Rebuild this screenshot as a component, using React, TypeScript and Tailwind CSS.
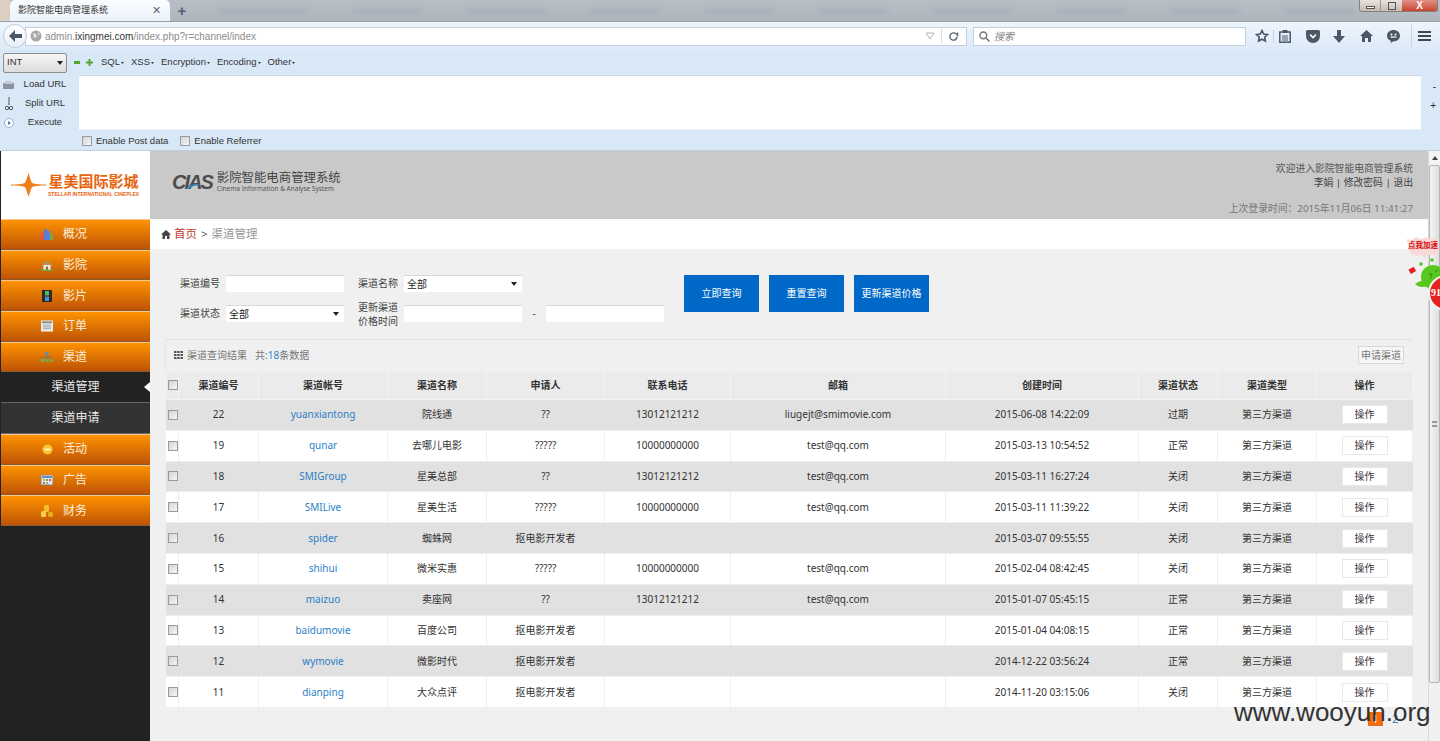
import React from "react";

const FONT = "font-['Noto_Sans','Noto_Sans_CJK_SC',sans-serif]";
const ARIAL = "font-['Liberation_Sans','Noto_Sans_CJK_SC',sans-serif]";

type Row = [string, string, string, string, string, string, string, string];

const rows: Row[] = [
  ["22", "yuanxiantong", "院线通", "??", "13012121212", "liugejt@smimovie.com", "2015-06-08 14:22:09", "过期"],
  ["19", "qunar", "去哪儿电影", "?????", "10000000000", "test@qq.com", "2015-03-13 10:54:52", "正常"],
  ["18", "SMIGroup", "星美总部", "??", "13012121212", "test@qq.com", "2015-03-11 16:27:24", "关闭"],
  ["17", "SMILive", "星美生活", "?????", "10000000000", "test@qq.com", "2015-03-11 11:39:22", "关闭"],
  ["16", "spider", "蜘蛛网", "抠电影开发者", "", "", "2015-03-07 09:55:55", "关闭"],
  ["15", "shihui", "微米实惠", "?????", "10000000000", "test@qq.com", "2015-02-04 08:42:45", "关闭"],
  ["14", "maizuo", "卖座网", "??", "13012121212", "test@qq.com", "2015-01-07 05:45:15", "正常"],
  ["13", "baidumovie", "百度公司", "抠电影开发者", "", "", "2015-01-04 04:08:15", "正常"],
  ["12", "wymovie", "微影时代", "抠电影开发者", "", "", "2014-12-22 03:56:24", "正常"],
  ["11", "dianping", "大众点评", "抠电影开发者", "", "", "2014-11-20 03:15:06", "关闭"],
];

const heads = ["渠道编号", "渠道帐号", "渠道名称", "申请人", "联系电话", "邮箱", "创建时间", "渠道状态", "渠道类型", "操作"];
const colWidths = [13, 80, 129, 99, 118, 126, 215, 193, 79, 99, 96];

function Checkbox({ className = "" }: { className?: string }) {
  return <span className={`block w-[10px] h-[10px] border border-[#9a9a9a] bg-gradient-to-br from-[#d4d4d4] to-[#f6f6f6] ${className}`} />;
}

function Select({ value, width = "w-[118px]" }: { value: string; width?: string }) {
  return (
    <div className={`${width} h-[17px] bg-white border-t border-[#d8d8d8] flex items-center justify-between pl-[3px] pr-[5px] text-[10px] text-[#222]`}>
      <span>{value}</span>
      <svg width="6" height="4" viewBox="0 0 6 4"><path d="M0 0h6L3 4z" fill="#222" /></svg>
    </div>
  );
}

function Input({ width = "w-[118px]" }: { width?: string }) {
  return <div className={`${width} h-[17px] bg-white border-t border-[#d8d8d8]`} />;
}

function MenuItem({ label, active, sub, icon }: { label: string; active?: boolean; sub?: boolean; icon?: React.ReactNode }) {
  if (sub) {
    return (
      <div className={`relative h-[30.7px] flex items-center justify-center text-[12px] text-[#e8e8e8] border-b border-[#666] ${active ? "bg-[#222]" : "bg-[#333]"}`}>
        {label}
        {active && <span className="absolute right-0 top-[10px] w-0 h-0 border-y-[5px] border-y-transparent border-r-[6px] border-r-white" />}
      </div>
    );
  }
  return (
    <div className="h-[30.7px] flex items-center pl-[40px] gap-[10px] text-[12px] text-[#fbeedd] border-t border-[#f8c78e] border-b border-b-[#8a5a2a] bg-gradient-to-b from-[#ff9300] to-[#bd5305]">
      <span className="w-[12px] h-[12px] flex items-center justify-center">{icon}</span>
      {label}
    </div>
  );
}

const icons = {
  bars: (
    <svg width="12" height="12" viewBox="0 0 12 12">
      <rect x="0" y="5" width="3" height="7" fill="#e2524e" />
      <rect x="3" y="1" width="3" height="11" fill="#5b7fd6" />
      <rect x="6" y="3" width="3" height="9" fill="#5b7fd6" />
      <rect x="9" y="6" width="3" height="6" fill="#6bb04c" />
    </svg>
  ),
  house: (
    <svg width="12" height="12" viewBox="0 0 12 12">
      <path d="M6 1 0 7h2v4h8V7h2z" fill="#b98a5c" />
      <rect x="2.5" y="6" width="7" height="5" fill="#f3ead9" />
      <rect x="5" y="7.5" width="2" height="3.5" fill="#8d6b44" />
      <rect x="0" y="10.5" width="12" height="1.5" fill="#6aa84f" />
    </svg>
  ),
  film: (
    <svg width="10" height="12" viewBox="0 0 10 12">
      <rect width="10" height="12" fill="#2b2b2b" />
      <rect x="3" y="1" width="4" height="4.5" fill="#57b85a" />
      <rect x="3" y="6.5" width="4" height="4.5" fill="#4a90c8" />
    </svg>
  ),
  doc: (
    <svg width="13" height="12" viewBox="0 0 13 12">
      <rect width="13" height="12" fill="#eeeeee" />
      <rect x="1" y="1" width="11" height="2" fill="#8a8a8a" />
      <path d="M2 5h9M2 7h9M2 9h9" stroke="#9a9a9a" strokeWidth="1" />
    </svg>
  ),
  tree: (
    <svg width="12" height="10" viewBox="0 0 12 10">
      <rect x="4.5" y="0" width="3" height="3" fill="#5a8fc0" />
      <path d="M6 3v2M1.5 7V5h9v2M6 5v2" stroke="#777" strokeWidth="0.8" fill="none" />
      <rect x="0" y="7" width="3" height="3" fill="#6bb04c" />
      <rect x="4.5" y="7" width="3" height="3" fill="#6bb04c" />
      <rect x="9" y="7" width="3" height="3" fill="#6bb04c" />
    </svg>
  ),
  coin: (
    <svg width="11" height="11" viewBox="0 0 11 11">
      <circle cx="5.5" cy="5.5" r="5" fill="#f7c531" />
      <rect x="2.5" y="4.5" width="6" height="2" fill="#fff3c4" />
    </svg>
  ),
  table: (
    <svg width="12" height="10" viewBox="0 0 12 10">
      <rect width="12" height="10" fill="#dbe7f5" stroke="#6c8db5" strokeWidth="1" />
      <rect x="1" y="1" width="10" height="2" fill="#6c8db5" />
      <rect x="2" y="4" width="2" height="2" fill="#e4a23b" />
      <rect x="5" y="4" width="2" height="2" fill="#6bb04c" />
      <rect x="8" y="4" width="2" height="2" fill="#d9574f" />
      <rect x="2" y="7" width="2" height="2" fill="#6c8db5" />
      <rect x="5" y="7" width="2" height="2" fill="#e4a23b" />
    </svg>
  ),
  coins: (
    <svg width="12" height="12" viewBox="0 0 12 12">
      <rect x="3" y="0" width="5" height="7" rx="1.5" fill="#f5c02e" />
      <rect x="0" y="6" width="5" height="6" rx="1.5" fill="#f7cf52" />
      <rect x="7" y="7" width="5" height="5" rx="1.5" fill="#e9a91e" />
    </svg>
  ),
};

function BrowserChrome() {
  const stroke = "#4a5866";
  return (
    <div className={`shrink-0 bg-[#d9e8f7] text-[#333] ${ARIAL}`}>
      {/* tab strip */}
      <div className="relative h-[22px] flex items-end bg-gradient-to-b from-[#b8bec6] to-[#adb5bd] border-b border-[#98a0a8]">
        <div className="w-[10px] h-full bg-[#dccfc2]" />
        <div className="w-[160px] h-[21px] bg-gradient-to-b from-[#fbfdff] to-[#eaf2fb] rounded-t-[5px] flex items-center pl-[8px] pr-[9px] justify-between text-[9px] text-[#333]">
          <span>影院智能电商管理系统</span>
          <span className="text-[11px] text-[#666]">✕</span>
        </div>
        <span className="w-[24px] h-full flex items-center justify-center text-[15px] font-bold leading-none text-[#55606c]">+</span>
        <div className="flex-1 h-full flex items-center gap-[44px] pl-[24px] opacity-10 blur-[2px] overflow-hidden">
          {[90, 70, 80, 70, 70, 70, 80, 70, 70, 70].map((w, i) => (
            <span key={i} className="h-[6px] bg-[#5c6c80] shrink-0" style={{ width: w }} />
          ))}
        </div>
        <div className="absolute right-[2px] top-0 h-[12px] flex border border-t-0 border-[#8a7f78] rounded-b-[3px] overflow-hidden">
          <span className="w-[21px] bg-gradient-to-b from-[#e8e2da] to-[#c5bdb5] flex items-center justify-center border-r border-[#9b948d]">
            <span className="block w-[9px] h-[3px] mt-[3px] bg-white border border-[#555]" />
          </span>
          <span className="w-[21px] bg-gradient-to-b from-[#e8e2da] to-[#c5bdb5] flex items-center justify-center">
            <span className="block w-[8px] h-[8px] bg-transparent border border-[#555]" />
          </span>
          <span className="w-[35px] bg-gradient-to-b from-[#e0908a] to-[#c8412a] flex items-center justify-center text-white text-[10px] font-bold leading-none">X</span>
        </div>
      </div>
      {/* nav bar */}
      <div className="h-[28px] flex items-center bg-gradient-to-b from-[#eef5fc] to-[#dceaf8] pl-[3px]">
        <span className="z-10 w-[24px] h-[24px] rounded-full bg-gradient-to-b from-white to-[#e6eef7] border border-[#c0ccd8] flex items-center justify-center">
          <svg width="13" height="12" viewBox="0 0 13 12"><path d="M6 0 0 6l6 6V8h7V4H6z" fill="#4a5866" /></svg>
        </span>
        <div className="-ml-[2px] w-[942px] h-[19px] bg-white border border-[#c3d0dd] flex items-center pl-[4px] pr-[7px] text-[10px] text-[#8c8c8c]">
          <svg width="12" height="12" viewBox="0 0 12 12" className="mr-[3px]"><circle cx="6" cy="6" r="5.5" fill="#a8a8a8" /><path d="M3 3l3 1 1 3-3 1zM8 2l2 2-2 1z" fill="#e4e4e4" /></svg>
          <span>admin.</span><span className="text-[#333]">ixingmei.com</span><span>/index.php?r=channel/index</span>
          <svg width="10" height="8" viewBox="0 0 10 8" className="ml-auto"><path d="M1 1h8L5 7z" fill="none" stroke="#aab2ba" /></svg>
          <span className="w-px h-[15px] bg-[#d8dee5] mx-[6px]" />
          <svg width="11" height="11" viewBox="0 0 24 24" fill="none" stroke="#5b6672" strokeWidth="3"><path d="M20 12a8 8 0 1 1-2.5-5.8L21 9V3" /></svg>
        </div>
        <div className="ml-[6px] w-[273px] h-[19px] bg-white border border-[#c3d0dd] flex items-center pl-[5px] text-[10px] italic text-[#888]">
          <svg width="11" height="11" viewBox="0 0 12 12" className="mr-[4px]" fill="none" stroke="#777" strokeWidth="1.6"><circle cx="4.7" cy="4.7" r="3.7" /><path d="M7.5 7.5 11.5 11.5" /></svg>
          搜索
        </div>
        <div className="flex items-center ml-[9px]">
          <svg width="14" height="14" viewBox="0 0 14 14" fill="none" stroke={stroke} strokeWidth="1.6"><path d="m7 1.5 1.7 3.6 3.8.5-2.8 2.6.7 3.8L7 10.2 3.6 12l.7-3.8L1.5 5.6l3.8-.5z" /></svg>
          <span className="w-px h-[13px] bg-[#c6d3e0] ml-[4px] mr-[5px]" />
          <svg width="12" height="13" viewBox="0 0 12 13"><rect x="0.8" y="2" width="10.4" height="10.2" fill="none" stroke={stroke} strokeWidth="1.5" /><rect x="3.5" y="0" width="5" height="3" fill={stroke} /><path d="M3 6h6M3 8h6M3 10h6" stroke={stroke} /></svg>
          <svg width="14" height="13" viewBox="0 0 14 13" className="ml-[15px]"><path d="M1.5 0h11A1.5 1.5 0 0 1 14 1.5V6a7 7 0 0 1-14 0V1.5A1.5 1.5 0 0 1 1.5 0z" fill={stroke} /><path d="m4 4.5 3 3 3-3" stroke="#fff" strokeWidth="1.6" fill="none" /></svg>
          <svg width="12" height="13" viewBox="0 0 12 13" className="ml-[13px]"><path d="M4 0h4v6h4l-6 7-6-7h4z" fill={stroke} /></svg>
          <svg width="13" height="12" viewBox="0 0 13 12" className="ml-[15px]"><path d="M6.5 0 13 6h-2v6H8V8H5v4H2V6H0z" fill={stroke} /></svg>
          <svg width="13" height="13" viewBox="0 0 13 13" className="ml-[14px]"><path d="M6.5 0C10 0 13 2.4 13 5.7s-3 5.6-6.5 5.6L3.5 13l.3-2.3C1.500 9.800 0 8 0 5.700 0 2.400 3 0 6.500 0z" fill={stroke} /><circle cx="4.500" cy="4.500" r="1" fill="#fff" /><circle cx="8.500" cy="4.500" r="1" fill="#fff" /><path d="M3.500 7h6" stroke="#fff" strokeWidth="1.200" /></svg>
          <span className="w-px h-[22px] bg-[#c6d3e0] ml-[11px] mr-[6px]" />
          <span className="flex flex-col gap-[2px]">
            <span className="block w-[13px] h-[2px] bg-[#3d4854]" />
            <span className="block w-[13px] h-[2px] bg-[#3d4854]" />
            <span className="block w-[13px] h-[2px] bg-[#3d4854]" />
          </span>
        </div>
      </div>
      {/* hackbar */}
      <div className="h-[25px] flex items-center pl-[3px] text-[9.500px]">
        <div className="w-[64px] h-[20px] border border-[#8d8d8d] rounded-[2px] bg-gradient-to-b from-[#f6f6f6] to-[#dcdcdc] flex items-center justify-between px-[3px]">
          <span>INT</span>
          <svg width="6" height="4" viewBox="0 0 6 4"><path d="M0 0h6L3 4z" fill="#222" /></svg>
        </div>
        <span className="ml-[7px] w-[6px] h-[3px] bg-[#55a630]" />
        <svg width="7" height="7" viewBox="0 0 7 7" className="ml-[6px]"><path d="M2.500 0h2v2.500H7v2H4.500V7h-2V4.500H0v-2h2.500z" fill="#55a630" /></svg>
        <div className="flex ml-[8px] gap-[7px]">
          {["SQL", "XSS", "Encryption", "Encoding", "Other"].map((m) => (
            <span key={m} className="flex items-center gap-[1px]">
              {m}
              <svg width="3" height="2" viewBox="0 0 3 2"><path d="M0 0h3L1.500 2z" fill="#333" /></svg>
            </span>
          ))}
        </div>
      </div>
      <div className="flex h-[55px]">
        <div className="w-[79px] flex flex-col text-[9.500px]">
          {[
            ["Load URL", <svg key="a" width="11" height="10" viewBox="0 0 11 10"><rect y="3" width="11" height="6" rx="1" fill="#8a949e" /><rect x="2" y="1" width="7" height="3" fill="#c4cbd2" /></svg>],
            ["Split URL", <svg key="b" width="8" height="14" viewBox="0 0 8 14" fill="none" stroke="#555"><path d="M4 0v8" /><circle cx="2" cy="11" r="1.700" /><circle cx="6" cy="11" r="1.700" /></svg>],
            ["Execute", <svg key="c" width="10" height="10" viewBox="0 0 10 10"><circle cx="5" cy="5" r="4.500" fill="#fff" stroke="#8fb0d4" /><path d="M4 3l3 2-3 2z" fill="#4a78b0" /></svg>],
          ].map(([label, icon], i) => (
            <div key={i} className="h-[19px] shrink-0 flex items-center">
              <span className="w-[14px] pl-[3px] flex items-center justify-center">{icon}</span>
              <span className="w-[65px] pr-[3px] text-center">{label}</span>
            </div>
          ))}
        </div>
        <div className="w-[1342px] bg-white border-t border-[#cfd8e2] border-b border-b-[#e8eef5]" />
        <div className="flex-1 flex flex-col items-end pr-[4px] pt-[2px] text-[10px] leading-[19px]">
          <span>-</span>
          <span>+</span>
        </div>
      </div>
      <div className="h-[21px] flex items-center pt-[2px] pl-[82px] text-[9.500px] gap-[4px] border-b border-[#bcd0e6]">
        <Checkbox />
        <span>Enable Post data</span>
        <Checkbox className="ml-[8px]" />
        <span>Enable Referrer</span>
      </div>
    </div>
  );
}

function Sidebar() {
  return (
    <aside className="w-[150px] shrink-0 bg-[#222] border-l border-[#222] flex flex-col">
      <div className="h-[68px] bg-white flex items-center pl-[10px]">
        <svg width="35" height="24" viewBox="0 0 35 24">
          <path d="M0 11.500c7 0 11-.5 14-1.500C15.500 7 16.500 3 17.500 0c1 3 2 7 3.500 10 3 1 7 1.500 14 1.500v1c-7 0-11 .5-14 1.500-1.500 3-2.500 7-3.500 10-1-3-2-7-3.500-10-3-1-7-1.500-14-1.500z" fill="#f07d1a" />
        </svg>
        <div className="ml-[2px] flex flex-col items-center text-[#e8640f]">
          <span className="text-[15px] font-bold leading-[17px]">星美国际影城</span>
          <span className="text-[5px] font-bold leading-[8px] whitespace-nowrap font-['Liberation_Sans',sans-serif]">STELLAR INTERNATIONAL CINEPLEX</span>
        </div>
      </div>
      <MenuItem label="概况" icon={icons.bars} />
      <MenuItem label="影院" icon={icons.house} />
      <MenuItem label="影片" icon={icons.film} />
      <MenuItem label="订单" icon={icons.doc} />
      <MenuItem label="渠道" icon={icons.tree} />
      <MenuItem label="渠道管理" sub active />
      <MenuItem label="渠道申请" sub />
      <MenuItem label="活动" icon={icons.coin} />
      <MenuItem label="广告" icon={icons.table} />
      <MenuItem label="财务" icon={icons.coins} />
    </aside>
  );
}

function Header() {
  return (
    <header className="h-[68px] shrink-0 bg-[#c9c9c9] flex justify-between pl-[22px] pr-[15px] text-[#555]">
      <div className="flex items-center pb-[7px]">
        <span className="relative font-['Liberation_Sans',sans-serif] italic font-bold text-[20px] tracking-[-2px] text-[#4c4c4c] leading-none">
          CIAS
          <svg width="16" height="7" viewBox="0 0 18 8" className="absolute left-[13px] top-[10px]"><path d="M0 8C6 3 12 1 18 3 12 3 7 5 4 8z" fill="#2b86c5" /></svg>
        </span>
        <div className="ml-[5px] flex flex-col">
          <span className="text-[12.400px] leading-[12px] text-[#444]">影院智能电商管理系统</span>
          <span className="mt-[2px] text-[6.500px] leading-[6px] whitespace-nowrap text-[#555]">Cinema Information &amp; Analyse System</span>
        </div>
      </div>
      <div className="flex flex-col items-end text-[9.800px] pt-[11px]">
        <span className="leading-[14px] text-[#555]">欢迎进入影院智能电商管理系统</span>
        <span className="leading-[14px] text-[#444]">李娟 | 修改密码 | 退出</span>
        <span className="mt-[12px] leading-[14px] text-[#777]">上次登录时间：2015年11月06日 11:41:27</span>
      </div>
    </header>
  );
}

function SearchForm() {
  return (
    <div className="flex pl-[30px] pt-[26px] text-[10px] text-[#444]">
      <div className="flex flex-col">
        <div className="flex items-center h-[17px]">
          <span className="w-[39px] whitespace-nowrap">渠道编号</span>
          <span className="w-[7px]" />
          <Input />
          <span className="w-[14px]" />
          <span className="w-[39px] whitespace-nowrap">渠道名称</span>
          <span className="w-[7px]" />
          <Select value="全部" />
        </div>
        <div className="flex items-center h-[17px] mt-[13px]">
          <span className="w-[39px] whitespace-nowrap">渠道状态</span>
          <span className="w-[7px]" />
          <Select value="全部" />
          <span className="w-[14px]" />
          <span className="w-[39px] leading-[14px] whitespace-nowrap">
            更新渠道
            <br />
            价格时间
          </span>
          <span className="w-[7px]" />
          <Input />
          <span className="w-[24px] text-center">-</span>
          <Input />
        </div>
      </div>
      <div className="flex gap-[10px] ml-[20px] h-[37px] text-white">
        <span className="w-[75px] bg-[#0069c8] flex items-center justify-center">立即查询</span>
        <span className="w-[75px] bg-[#0069c8] flex items-center justify-center">重置查询</span>
        <span className="w-[75px] bg-[#0069c8] flex items-center justify-center">更新渠道价格</span>
      </div>
    </div>
  );
}

function ResultTable() {
  return (
    <div className="ml-[15px] mr-[15px] mt-[17px] border-t border-[#e2e2e2]">
      <div className="h-[30px] flex items-center justify-between pl-[8px] pr-[9px] border-l border-[#e6e6e6] text-[10px] text-[#777] bg-[#f0f0f0]">
        <div className="flex items-center">
          <svg width="9" height="8" viewBox="0 0 9 8" className="mr-[4px]"><path d="M0 0h2.500v2H0zM3.200 0h2.500v2H3.200zM6.500 0H9v2H6.500zM0 3h2.500v2H0zM3.200 3h2.500v2H3.200zM6.500 3H9v2H6.500zM0 6h2.500v2H0zM3.200 6h2.500v2H3.200zM6.500 6H9v2H6.500z" fill="#555" /></svg>
          渠道查询结果
          <span className="ml-[8px]">共:<span className="text-[#2b86d0]">18</span>条数据</span>
        </div>
        <span className="w-[46px] h-[18px] bg-[#f6f6f6] border border-[#d8d8d8] flex items-center justify-center">申请渠道</span>
      </div>
      <table className="w-[1247px] border-collapse table-fixed text-[10px] text-[#333]">
        <colgroup>
          {colWidths.map((w, i) => (
            <col key={i} style={{ width: w }} />
          ))}
        </colgroup>
        <thead>
          <tr className="h-[29px] bg-[#ebebeb]">
            <th className="border border-[#f3f3f3] font-normal">
              <Checkbox className="ml-[2px]" />
            </th>
            {heads.map((h) => (
              <th key={h} className="border border-[#f3f3f3] font-bold text-[#333]">{h}</th>
            ))}
          </tr>
        </thead>
        <tbody>
          {rows.map((r, i) => (
            <tr key={r[0]} className={`h-[30.800px] ${i % 2 === 0 ? "bg-[#e1e1e1]" : "bg-white"}`}>
              <td className={`border-b border-[#efefef] ${i % 2 === 0 ? "" : "border-r"}`}>
                <Checkbox className="ml-[2px]" />
              </td>
              {r.map((c, j) => (
                <td
                  key={j}
                  className={`text-center border-b border-[#efefef] whitespace-nowrap overflow-hidden ${i % 2 === 0 ? "" : "border-r"} ${j === 1 ? "text-[#2b7fc7]" : ""}`}
                >
                  {c}
                </td>
              ))}
              <td className={`text-center border-b border-[#efefef] ${i % 2 === 0 ? "" : "border-r"}`}>第三方渠道</td>
              <td className={`border-b border-[#efefef] ${i % 2 === 0 ? "" : "border-r"}`}>
                <span className="mx-auto w-[46px] h-[19px] bg-white border border-[#e8e8e8] flex items-center justify-center">操作</span>
              </td>
            </tr>
          ))}
        </tbody>
      </table>
      <div className="flex justify-end items-center pr-[13px] mt-[3px] text-[11px]">
        <span className="w-[15px] h-[14px] bg-[#f26c10] text-white flex items-center justify-center">1</span>
        <span className="ml-[9px] text-[#2b86d0] w-[8px]">2</span>
      </div>
    </div>
  );
}

function Scrollbar() {
  return (
    <div className="w-[12px] shrink-0 bg-[#f0f0f0] border-l border-[#d9d9d9] flex flex-col">
      <div className="h-[14px] bg-[#f4f4f4] flex items-center justify-center">
        <svg width="6" height="4" viewBox="0 0 6 4"><path d="M3 0l3 4H0z" fill="#444" /></svg>
      </div>
      <div className="h-[518px] bg-gradient-to-r from-[#f5f5f5] to-[#dedede] border border-[#b5b5b5] rounded-[2px] flex items-center justify-center">
        <span className="w-[5px] h-[6px] border-y-2 border-[#999]" />
      </div>
    </div>
  );
}

function Mascot() {
  return (
    <div className="absolute right-0 top-[85px] w-[36px] h-[80px] overflow-hidden pointer-events-none">
      <svg width="36" height="80" viewBox="0 0 36 80" className="absolute left-0 top-0">
        <path d="M3 3 8 4l4-3 5 2 5-2 4 2 6-1 3 3v12l-4 2-8 0-2 4-3-4-6 1-5-2-1-3-2-3 1-3-2-3z" fill="#fbd9d9" />
        <rect x="5" y="32" width="6" height="5" fill="#e02020" transform="rotate(-30 8 34)" />
        <circle cx="17" cy="28" r="1.800" fill="#55c220" />
        <circle cx="28" cy="24" r="1.800" fill="#55c220" />
        <circle cx="29" cy="41" r="12" fill="#58c81e" />
        <path d="M11 48c4-3 7-4 11-3l1 5c-4 2-9 1-12-2z" fill="#58c81e" />
        <path d="M25 38h3l-2 5M31 36l3-2" stroke="#2f7a10" strokeWidth="0.800" fill="none" />
        <circle cx="42" cy="57" r="17" fill="#e52222" stroke="#f4f4f4" strokeWidth="2" />
      </svg>
      <span className="absolute left-[3px] top-[4px] w-[32px] text-center text-[7.500px] leading-[10px] font-bold text-[#d01010] whitespace-nowrap">点我加速</span>
      <span className="absolute left-[27px] top-[52px] text-[10px] font-bold text-white font-['Liberation_Serif',serif] leading-none">91</span>
    </div>
  );
}

export default function App() {
  return (
    <div className={`relative w-[1440px] h-[741px] overflow-hidden flex flex-col bg-[#f0f0f0] ${FONT}`}>
      <BrowserChrome />
      <div className="relative flex-1 min-h-0 flex">
        <Sidebar />
        <main className="flex-1 min-w-0 flex flex-col">
          <Header />
          <div className="h-[30px] shrink-0 bg-white flex items-center pl-[11px] text-[11.500px]">
            <svg width="10" height="9" viewBox="0 0 10 9" className="mr-[3px]"><path d="M5 0 10 4.500H8.500V9H6V6H4v3H1.500V4.500H0z" fill="#444" /></svg>
            <span className="text-[#c0392b]">首页</span>
            <span className="mx-[4px] text-[#555]">&gt;</span>
            <span className="text-[#999]">渠道管理</span>
          </div>
          <SearchForm />
          <ResultTable />
        </main>
        <Scrollbar />
        <Mascot />
      </div>
      <span className="absolute left-[1234px] top-[697px] text-[26px] leading-[30px] text-[#333] font-['Liberation_Sans',sans-serif] whitespace-nowrap">www.wooyun.org</span>
    </div>
  );
}
